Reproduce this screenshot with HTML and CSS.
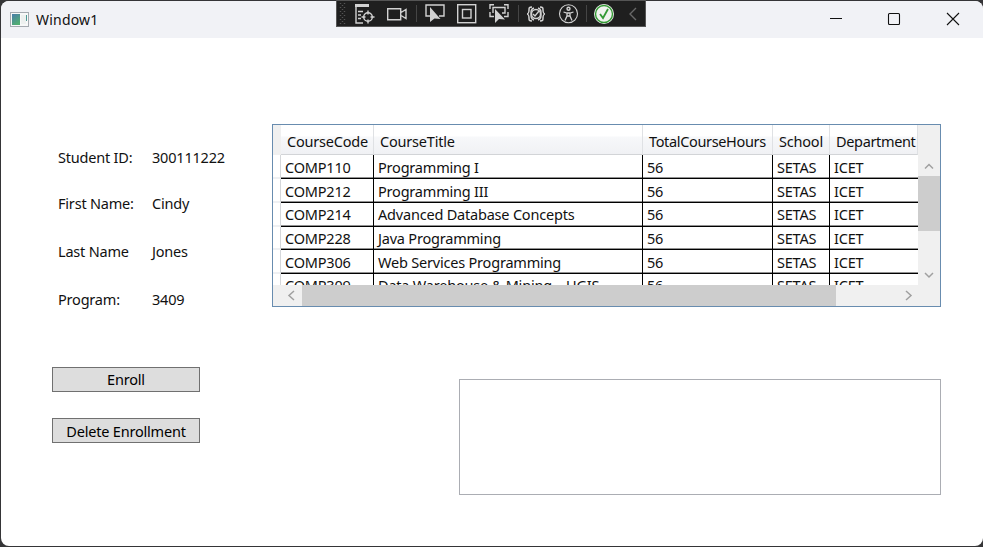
FILE: index.html
```html
<!DOCTYPE html>
<html lang="en">
<head>
<meta charset="utf-8">
<title>Window1</title>
<link rel="stylesheet" href="styles.css">
</head>
<body>
<main class="window">
  <header class="titlebar">
    <svg class="app-icon" width="19" height="15" viewBox="0 0 19 15"><rect x=".5" y=".5" width="18" height="14" fill="#f7f8f8" stroke="#a5aab0"/><defs><linearGradient id="g" x2="0.5" y2="1"><stop stop-color="#4a7cab"/><stop offset="1" stop-color="#51ad72"/></linearGradient></defs><rect x="2" y="2" width="8" height="11" fill="url(#g)"/><path d="M11 3h5v9h-5z" fill="#edf0ef"/><path d="M16 3h1v6h-1z" fill="#4d9a96"/></svg>
    <h1>Window1</h1>
    <svg class="controls" width="153" height="37" viewBox="0 0 153 37" fill="none" stroke="#111" stroke-width="1.1"><path d="M0 17.500h12"/><rect x="58.500" y="12.500" width="11" height="11" rx="1"/><path d="m117 12 12 12m0-12-12 12"/></svg>
  </header>
  <section class="content">
    <dl class="student">
      <div><dt>Student ID:</dt><dd>300111222</dd></div>
      <div><dt>First Name:</dt><dd>Cindy</dd></div>
      <div><dt>Last Name</dt><dd>Jones</dd></div>
      <div><dt>Program:</dt><dd>3409</dd></div>
    </dl>
    <div class="datagrid">
      <div class="view">
        <div class="row head"><i></i><span>CourseCode</span><span>CourseTitle</span><span class="tight">TotalCourseHours</span><span>School</span><span class="tight">Department</span></div>
        <div class="row"><i></i><span>COMP110</span><span>Programming I</span><span>56</span><span>SETAS</span><span>ICET</span></div>
        <div class="row"><i></i><span>COMP212</span><span>Programming III</span><span>56</span><span>SETAS</span><span>ICET</span></div>
        <div class="row high"><i></i><span>COMP214</span><span>Advanced Database Concepts</span><span>56</span><span>SETAS</span><span>ICET</span></div>
        <div class="row high short"><i></i><span>COMP228</span><span>Java Programming</span><span>56</span><span>SETAS</span><span>ICET</span></div>
        <div class="row"><i></i><span>COMP306</span><span>Web Services Programming</span><span>56</span><span>SETAS</span><span>ICET</span></div>
        <div class="row high"><i></i><span>COMP309</span><span>Data Warehouse &amp; Mining – UGIS</span><span>56</span><span>SETAS</span><span>ICET</span></div>
      </div>
      <div class="vscroll">
        <svg width="22" height="21" viewBox="0 0 22 21"><path d="m7 13.500 4-4 4 4"/></svg>
        <div class="vthumb"></div>
        <svg class="end" width="22" height="21" viewBox="0 0 22 21"><path d="m7 9 4 4 4-4"/></svg>
      </div>
      <div class="hscroll">
        <svg width="29" height="21" viewBox="0 0 29 21"><path d="m21 6-5 4.500 5 4.500"/></svg>
        <div class="hthumb"></div>
        <svg class="end" width="22" height="21" viewBox="0 0 22 21"><path d="m9 6 5 4.500-5 4.500"/></svg>
      </div>
    </div>
    <div class="actions">
      <button>Enroll</button>
      <button>Delete Enrollment</button>
    </div>
    <div class="listbox"></div>
  </section>
</main>
<svg class="toolbar" width="310" height="27" viewBox="0 0 310 27" fill="none" stroke="#d2d2d2" stroke-width="1.4">
  <rect width="310" height="27" fill="#1f1f1f" stroke="none"/>
  <path d="M0 .5h310M.5 0v27M0 26.500h310M309.500 0v27" stroke="#555" stroke-width="1"/>
  <path d="M4.500 3v22M8.500 3v22" stroke="#555" stroke-dasharray="1 3"/><path d="M6.500 5v20" stroke="#555" stroke-dasharray="1 3"/>
  <path d="M20 5v18h7M22 11.500h5M22 15h3M22 18.500h3"/><path d="M19 5.500h14" stroke-width="3"/>
  <circle cx="32" cy="17" r="4.300"/><path d="M32 10.500v4M32 19.500v4M25.500 17h4M34.500 17h4"/>
  <path d="M51.700 8.700h13v11h-13zM65 12.500l5-3v9l-5-3"/>
  <path d="M80.500 5v17M182.500 5v17" stroke="#454545" stroke-width="1"/>
  <path d="M95 16h-5V5h18v11h-5"/><path d="M94 7v15l4.500-3.500 6 .5z" fill="#d2d2d2" stroke="none"/>
  <rect x="121.700" y="4.700" width="18" height="18"/><rect x="126.500" y="9.500" width="8.500" height="8.500"/>
  <path d="M154 9V4.700h4M168 4.700h4V9M154 12v4.500h4M172 12v4.500h-4M157 13V7.500h12V13h-3"/><path d="M159 9v14l4-4 6 .5z" fill="#d2d2d2" stroke="none"/>
  <path d="M196 7c-3 0-3 1-3 3s-1 4-2 4c1 0 2 2 2 4s0 3 3 3M204 7c3 0 3 1 3 3s1 4 2 4c-1 0-2 2-2 4s0 3-3 3M198 8c-3 1-3 3-3 6s0 5 3 6M202 8c3 1 3 3 3 6s0 5-3 6" stroke-width="1.500"/><circle cx="200" cy="14" r="4.500"/><path d="m197 14 2 2 4-5"/>
  <circle cx="232.500" cy="13.700" r="9" stroke-width="1.100"/><circle cx="232.500" cy="8.700" r="1.500"/><path d="M227.500 12l3.500 1h3l3.500-1M231 13v3l-2 4.500M234 13v3l2 4.500M231 16h3" stroke-width="1.300"/>
  <path d="M250.500 5v17" stroke="#454545" stroke-width="1"/>
  <circle cx="268" cy="14" r="10" fill="#f0f3ef" stroke="none"/><circle cx="268" cy="14" r="8.500" stroke="#349a35"/><path d="m264 14 3 4 5-9" stroke="#349a35" stroke-width="1.800"/>
  <path d="m300 8-6 6 6 6" stroke="#686868"/>
</svg>
</body>
</html>
```

FILE: styles.css
```css
* { box-sizing: border-box; }
body {
  margin: 0;
  height: 547px;
  padding: 1px 0 1px 1px;
  overflow: hidden;
  background: #353537;
  color: #111;
  font: 14.5px/20px "Noto Sans", sans-serif;
  letter-spacing: -0.2px;
}
.window { height: 545px; border-radius: 8px; overflow: hidden; background: #fff; }
.titlebar { display: flex; align-items: center; height: 37px; padding-left: 9px; background: #f1f2f6; }
h1 { flex: 1; margin: 1px 0 0 7px; font-size: 14px; font-weight: 400; letter-spacing: 0.2px; }
.content { display: grid; grid-template-columns: 271px 187px 482px; grid-template-rows: 86px 183px 72px 116px; }
.student { grid-area: 2 / 1; margin: 0; padding: 23px 0 0 57px; }
.student div { display: flex; height: 48px; }
.student div:first-child { height: 46px; }
dt { width: 94px; }
dd { margin: 0; }
.datagrid {
  grid-area: 2 / 2 / 3 / 4;
  display: grid;
  grid-template: 160px 21px / 645px 22px;
  border: 1px solid #688caf;
  background: #f0f0f0;
}
.view { overflow: hidden; background: #fff; }
.row { display: grid; grid-template-columns: 8px 93px 269px 130px 57px 88px; height: 24px; line-height: 20px; }
.row.short { height: 23px; }
.row i { border-bottom: 2px solid #eef0f3; border-right: 1px solid #d5d7da; background: #fff; }
.row span { padding: 2px 0 0 4px; white-space: nowrap; border-right: 1px solid #000; border-bottom: 1px solid #000; box-shadow: inset 0 -1px #929292; }
.row.high span { padding-top: 1px; }
.row span:last-child { border-right: 0; }
.row.head { height: 30px; }
.head i { border: 0; background: #f0f0f0; }
.row.head span {
  padding: 6px 0 0 6px;
  border-right: 1px solid #dfe1e4;
  border-bottom: 1px solid #d2d4d7;
  box-shadow: none;
  background: linear-gradient(#fff 0 11px, #f7f8fa 12px, #f0f1f4);
}
.row.head .tight { letter-spacing: -0.35px; }
.vscroll, .hscroll { display: flex; }
.vscroll { flex-direction: column; padding-top: 30px; }
.hscroll { grid-column: 1 / 3; }
.vscroll svg, .hscroll svg { fill: none; stroke: #a0a0a0; stroke-width: 1.5px; }
.vthumb { height: 55px; background: #cdcdcd; }
.hthumb { width: 534px; background: #cdcdcd; }
.vscroll .end { margin-top: auto; }
.hscroll .end { margin: 0 21px 0 auto; }
.actions { grid-area: 3 / 1 / 5 / 2; padding: 60px 0 0 51px; display: flex; flex-direction: column; gap: 26px; }
button {
  width: 148px;
  height: 25px;
  padding: 0 0 2px;
  border: 1px solid #707070;
  background: #ddd;
  color: #000;
  font: inherit;
  letter-spacing: inherit;
}
button:last-child { padding-bottom: 0; }
.listbox { grid-area: 4 / 3; border: 1px solid #abadb3; }
.toolbar { position: absolute; top: 0; left: 336px; }
```
